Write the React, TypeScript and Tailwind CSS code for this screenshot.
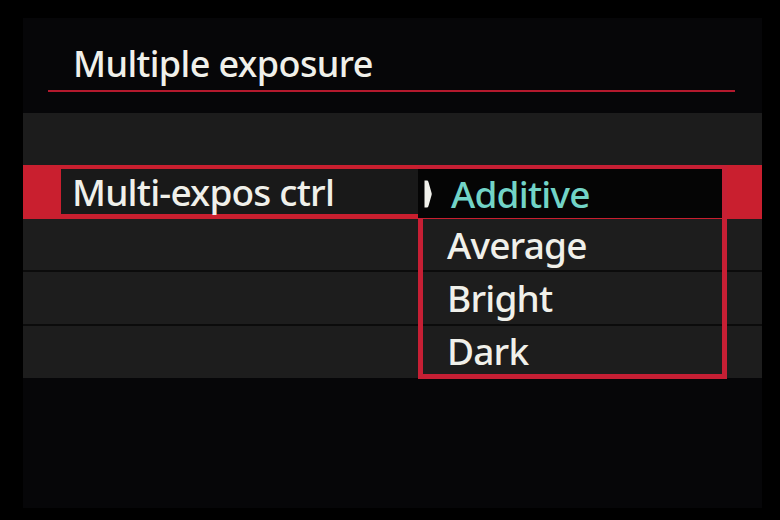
import React from "react";

function Arrow() {
  return (
    <svg width="8" height="28" viewBox="0 0 8 28" className="shrink-0 block">
      <path d="M0.5 0.5 L3 0.5 Q4 0.5 4.4 1.8 L7.6 13 Q7.9 14 7.6 15 L4.4 26.2 Q4 27.5 3 27.5 L0.5 27.5 Z" fill="#f2f2ec" />
    </svg>
  );
}

export default function App() {
  const font = { fontFamily: '"Noto Sans", "Open Sans", sans-serif' };
  return (
    <div className="w-[780px] h-[520px] bg-black pt-[18px] pl-[23px] overflow-hidden" style={font}>
      <div className="w-[739px] h-[490px] bg-[#060608] flex flex-col">
        <div className="pt-[22px] pl-[50px] text-[36px] leading-[47px] font-medium tracking-[-0.6px] text-[#f0f0ea]">
          Multiple exposure
        </div>
        <div className="mt-[3px] ml-[25px] w-[687px] h-[2px] bg-[#b3192d]" />
        <div className="mt-[21px] relative flex flex-col bg-[#0c0c0c] text-[37px] font-medium tracking-[-0.8px] text-[#f0f0ea]">
          <div className="h-[52px] bg-[#1c1c1c]" />
          <div className="h-[54px] bg-[#c91f2f] flex items-start pt-[4px]">
            <div className="ml-[38px] w-[357px] h-[45px] bg-[#191919] pl-[11px] leading-[45px]">
              Multi-expos ctrl
            </div>
          </div>
          <div className="h-[51px] bg-[#1d1d1d]" />
          <div className="h-[2px] bg-[#0b0b0b]" />
          <div className="h-[52px] bg-[#1d1d1d]" />
          <div className="h-[2px] bg-[#0b0b0b]" />
          <div className="h-[52px] bg-[#1d1d1d]" />

          <div className="absolute left-[395px] top-[52px] w-[309px] h-[214px] border-[5px] border-[#c61f34] flex flex-col">
            <div className="h-[53px] -ml-[5px] -mt-[1px]">
              <div className="h-[49px] bg-[#050505] flex items-center pl-[6px]">
                <Arrow />
                <span className="ml-[19px] leading-[46px] text-[#72d4c7]">Additive</span>
              </div>
            </div>
            <div className="h-[53px] pl-[24px] leading-[46px]">Average</div>
            <div className="h-[53px] pl-[24px] leading-[46px]">Bright</div>
            <div className="h-[45px] pl-[24px] leading-[46px]">Dark</div>
          </div>
        </div>
      </div>
    </div>
  );
}
